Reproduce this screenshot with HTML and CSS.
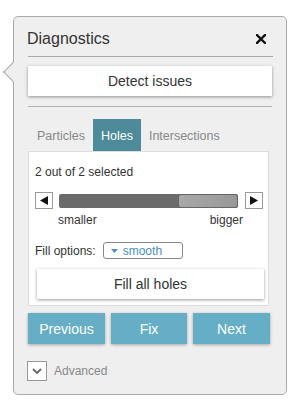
FILE: index.html
```html
<!DOCTYPE html>
<html lang="en">
<head>
    <meta charset="UTF-8">
    <meta name="viewport" content="width=device-width, initial-scale=1.0">
    <title>Diagnostics</title>
    <link rel="stylesheet" href="styles.css">
</head>
<body>

    <div class="panel">
        <!-- Cabeçalho -->
        <div class="header">
            <span class="title">Diagnostics</span>
            <svg class="close" width="10" height="10" viewBox="0 0 10 10">
                <path d="M1 1L9 9M9 1L1 9" stroke="#111" stroke-width="2.4" stroke-linecap="square"/>
            </svg>
        </div>

        <button class="btn-white detect">Detect issues</button>
        <div class="divider"></div>

        <!-- Abas -->
        <div class="tabs">
            <span class="tab first">Particles</span>
            <span class="tab active">Holes</span>
            <span class="tab">Intersections</span>
        </div>

        <div class="tab-body">
            <p class="info">2 out of 2 selected</p>

            <div class="slider-row">
                <span class="step">
                    <svg width="8" height="9" viewBox="0 0 8 9"><path d="M0 4.5L8 0V9Z" fill="#111"/></svg>
                </span>
                <div class="track"><div class="thumb"></div></div>
                <span class="step">
                    <svg width="8" height="9" viewBox="0 0 8 9"><path d="M8 4.5L0 0V9Z" fill="#111"/></svg>
                </span>
            </div>
            <div class="slider-labels">
                <span>smaller</span>
                <span>bigger</span>
            </div>

            <div class="fill-row">
                <span>Fill options:</span>
                <span class="select">
                    <svg width="7" height="4" viewBox="0 0 7 4"><path d="M0 0H7L3.5 4Z" fill="#4a8fd0"/></svg>
                    smooth
                </span>
            </div>

            <button class="btn-white fill">Fill all holes</button>
        </div>

        <!-- Navegação -->
        <div class="nav">
            <button class="btn-blue">Previous</button>
            <button class="btn-blue">Fix</button>
            <button class="btn-blue">Next</button>
        </div>

        <div class="advanced">
            <span class="check">
                <svg width="10" height="6" viewBox="0 0 10 6"><path d="M1 1L5 5L9 1" stroke="#666" stroke-width="1.8" fill="none"/></svg>
            </span>
            <span>Advanced</span>
        </div>
    </div>

</body>
</html>
```

FILE: styles.css
```css
body { margin: 0; background: #fff; font-family: "Liberation Sans", Arial, sans-serif; color: #333; }

.panel { position: relative; margin: 16px 0 0 13px; width: 244px; padding: 0 14px 13px 14px; background: #efefef; border: 1px solid #aaa; border-radius: 5px; }
.panel::before { content: ""; position: absolute; left: -8px; top: 48px; width: 13px; height: 13px; background: #efefef; border-left: 1px solid #aaa; border-bottom: 1px solid #aaa; transform: rotate(45deg); }

.header { display: flex; align-items: center; justify-content: space-between; height: 34px; padding-top: 5px; border-bottom: 1px solid #a8a8a8; margin-right: -1px; }
.title { font-size: 16px; color: #333; margin-left: -1px; }
.close { margin-right: 7px; }

button { font-family: inherit; border: none; cursor: pointer; }
.btn-white { display: block; background: #fff; color: #333; font-size: 14px; box-shadow: 0 1px 3px rgba(0, 0, 0, 0.4); }
.detect { width: 244px; height: 30px; margin-top: 9px; }
.divider { height: 0; border-top: 1px solid #b0b0b0; margin-top: 10px; }

.tabs { display: flex; margin-top: 12px; height: 32px; }
.tab { display: flex; align-items: center; padding: 2px 8px 0 8px; font-size: 12.5px; color: #888; }
.tab.first { padding-left: 9px; }
.tab.active { background: #4d8a9a; color: #fff; }

.tab-body { width: 228px; margin-right: 2px; padding: 13px 5px 6px 6px; background: #fff; border: 1px solid #ddd; }
.info { margin: 0; font-size: 12px; line-height: 14px; }

.slider-row { display: flex; align-items: center; margin-top: 13px; height: 17px; }
.step { display: flex; align-items: center; justify-content: center; box-sizing: border-box; width: 18px; height: 17px; background: #fff; border: 1px solid #999; }
.track { position: relative; width: 181px; height: 14px; margin: 0 7px 0 6px; background: #6b6b6b; border-radius: 2px; }
.thumb { position: absolute; right: 0; top: 0; box-sizing: border-box; width: 60px; height: 14px; background: linear-gradient(to right, #a8a8a8, #999); border: 1px solid #666; border-radius: 3px; }

.slider-labels { display: flex; justify-content: space-between; width: 185px; margin: 4px 0 0 23px; font-size: 12px; line-height: 14px; }

.fill-row { display: flex; align-items: center; gap: 7px; margin-top: 15px; font-size: 12px; }
.select { display: flex; align-items: center; gap: 5px; box-sizing: border-box; width: 80px; height: 17px; padding-left: 7px; border: 1px solid #888; border-radius: 3px; color: #4a8fc0; }

.fill { width: 227px; height: 30px; margin: 10px 0 0 2px; }

.nav { display: flex; gap: 6px; margin-top: 7px; width: 242px; }
.btn-blue { width: 77px; height: 31px; background: #66aec6; color: #fff; font-size: 14px; box-shadow: 0 1px 3px rgba(0, 0, 0, 0.3); }
.btn-blue:nth-child(2) { width: 76px; }

.advanced { display: flex; align-items: center; gap: 7px; margin: 17px 0 0 -1px; font-size: 12px; color: #888; }
.check { display: flex; align-items: center; justify-content: center; box-sizing: border-box; width: 20px; height: 20px; background: #fff; border: 1px solid #999; }
```
